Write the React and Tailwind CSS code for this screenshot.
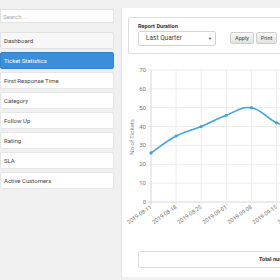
const MENU = [
  'Dashboard',
  'Ticket Statistics',
  'First Response Time',
  'Category',
  'Follow Up',
  'Rating',
  'SLA',
  'Active Customers',
]

const POINTS = [
  ['2019-08-11', 26],
  ['2019-08-18', 35],
  ['2019-08-25', 40],
  ['2019-09-01', 46],
  ['2019-09-08', 50],
  ['2019-09-15', 42],
  ['2019-09-22', 38],
]

// chart geometry, in svg coords (svg sits at page x=121, y=58)
const X0 = 29
const STEP = 25.1
const Y0 = 144
const PER = 18.86 / 10

function smoothPath(pts) {
  let d = `M${pts[0][0]},${pts[0][1]}`
  for (let i = 0; i < pts.length - 1; i++) {
    const p0 = pts[i - 1] || pts[i]
    const p1 = pts[i]
    const p2 = pts[i + 1]
    const p3 = pts[i + 2] || p2
    const t = 0.2
    const c1x = p1[0] + (p2[0] - p0[0]) * t
    const c1y = p1[1] + (p2[1] - p0[1]) * t
    const c2x = p2[0] - (p3[0] - p1[0]) * t
    const c2y = p2[1] - (p3[1] - p1[1]) * t
    d += ` C${c1x},${c1y} ${c2x},${c2y} ${p2[0]},${p2[1]}`
  }
  return d
}

function Chart() {
  const pts = POINTS.map(([, v], i) => [X0 + i * STEP, Y0 - v * PER])
  const ticks = [0, 10, 20, 30, 40, 50, 60, 70]
  return (
    <svg width="159" height="180" className="block" style={{ fontFamily: 'Roboto, "Liberation Sans", sans-serif' }}>
      {ticks.map((t) => (
        <g key={t}>
          <line x1={X0 - 3} x2={170} y1={Y0 - t * PER} y2={Y0 - t * PER} stroke={t === 0 ? '#d6d6d6' : '#ececec'} strokeWidth="1" />
          <text x={X0 - 5} y={Y0 - t * PER + 2} fontSize="6" fill="#777" textAnchor="end">{t}</text>
        </g>
      ))}
      {POINTS.map(([label], i) => {
        const x = X0 + i * STEP
        return (
          <g key={label}>
            <line x1={x} x2={x} y1={Y0 - 70 * PER} y2={Y0 + 3} stroke={i === 0 ? '#d6d6d6' : '#ececec'} strokeWidth="1" />
            <text x={x + 1} y={Y0 + 6} fontSize="5.6" fill="#777" textAnchor="end" transform={`rotate(-35 ${x + 1} ${Y0 + 6})`}>{label}</text>
          </g>
        )
      })}
      <text x={12} y={79} fontSize="6" fill="#888" textAnchor="middle" transform="rotate(-90 12 79)">No of Tickets</text>
      <path d={smoothPath(pts)} fill="none" stroke="#3ea3ea" strokeWidth="1.6" />
      {pts.map(([x, y], i) => (
        <circle key={i} cx={x} cy={y} r="1.6" fill="#3ea3ea" />
      ))}
    </svg>
  )
}

export default function App() {
  return (
    <div className="flex h-[280px] w-[280px] overflow-hidden bg-[#f0f0f0] text-[#555]" style={{ fontFamily: 'Roboto, "Liberation Sans", sans-serif' }}>
      <div className="flex w-[114px] shrink-0 flex-col pt-[9px]">
        <div className="flex h-[14px] items-center border border-[#e2e2e2] bg-white pl-[2px] text-[6px] text-[#aaa]">Search....</div>
        <div className="mt-[9px] flex flex-col gap-[3px]">
          {MENU.map((m, i) => (
            <div
              key={m}
              className={
                i === 1
                  ? 'flex h-[17px] items-center rounded-[2px] border border-[#2f84cf] bg-[#3a8fd8] pl-[3px] text-[6px] text-white'
                  : i === 0
                    ? 'flex h-[17px] items-center rounded-[2px] border border-[#e2e2e2] bg-[#f7f7f7] pl-[3px] text-[6px] text-[#444]'
                    : 'flex h-[17px] items-center rounded-[2px] border border-[#e6e6e6] bg-white pl-[3px] text-[6px] text-[#444]'
              }
            >
              {m}
            </div>
          ))}
        </div>
      </div>

      <div className="ml-[7px] mt-[8px] h-[269px] min-w-0 flex-1 overflow-hidden border-l border-[#e4e4e4] bg-white">
        <div className="ml-[6px] mt-[9px] h-[37px] w-[200px] rounded-[2px] border border-[#dcdcdc] px-[9px] pt-[4px]">
          <div className="text-[5.6px] font-bold leading-[8px] text-[#333]">Report Duration</div>
          <div className="mt-[1px] flex items-start">
            <div className="flex h-[15px] w-[78px] items-center justify-between rounded-[2px] border border-[#d4d4d4] bg-white pl-[7px] pr-[3px] text-[6.5px] text-[#444]">
              <span>Last Quarter</span>
              <span className="text-[4px] text-[#444]">▼</span>
            </div>
            <div className="ml-[14px] mt-[1px] flex h-[12px] w-[24px] items-center justify-center rounded-[2px] border border-[#cfcfcf] bg-gradient-to-b from-[#f8f8f8] to-[#e2e2e2] text-[5.6px] text-[#444]">Apply</div>
            <div className="ml-[2px] mt-[1px] flex h-[12px] w-[21px] items-center justify-center rounded-[2px] border border-[#cfcfcf] bg-gradient-to-b from-[#f8f8f8] to-[#e2e2e2] text-[5.6px] text-[#444]">Print</div>
          </div>
        </div>

        <div className="mt-[4px]">
          <Chart />
        </div>

        <div className="ml-[16px] mt-[13px] flex h-[17px] w-[250px] items-center rounded-[2px] border border-[#dcdcdc] pl-[120px] text-[5.6px] font-bold text-[#333]">
          Total number of tickets
        </div>
      </div>
    </div>
  )
}
